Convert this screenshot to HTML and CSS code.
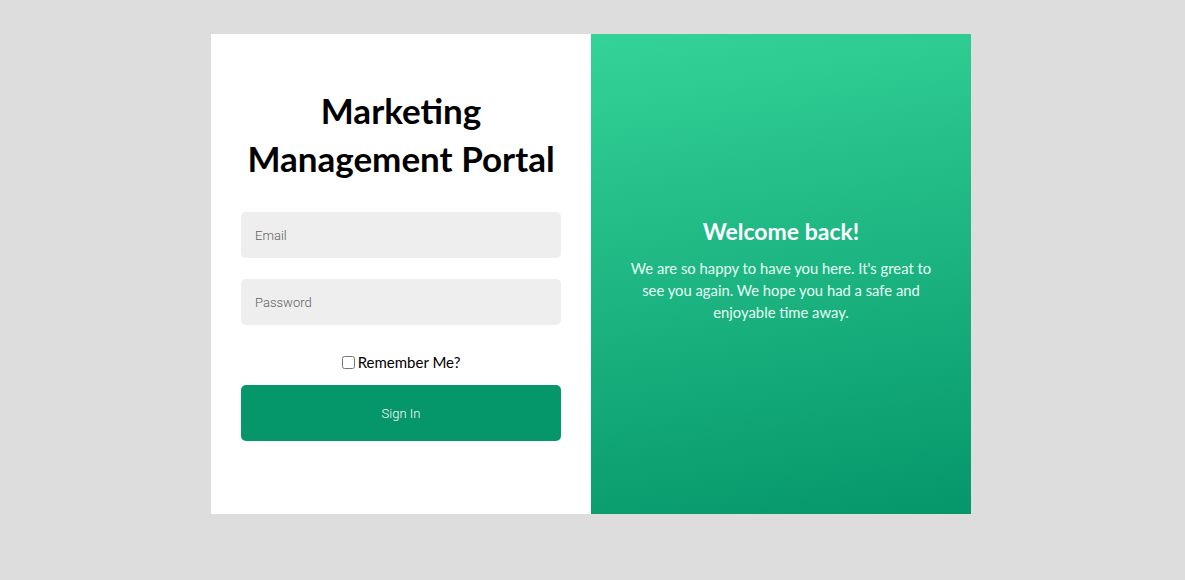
FILE: index.html
```html
<!DOCTYPE html>
<html lang="en">
<head>
<meta charset="utf-8">
<title>Marketing Management Portal</title>
<link rel="stylesheet" href="styles.css">
</head>
<body>
<main class="card">
  <section class="login">
    <h1 class="title">Marketing Management Portal</h1>
    <form class="form">
      <input class="field" type="email" placeholder="Email">
      <input class="field" type="password" placeholder="Password">
      <label class="remember"><input type="checkbox" class="check"><span>Remember Me?</span></label>
      <button type="button" class="submit">Sign In</button>
    </form>
  </section>
  <section class="welcome">
    <h2 class="welcome-title">Welcome back!</h2>
    <p class="welcome-text">We are so happy to have you here. It's great to see you again. We hope you had a safe and enjoyable time away.</p>
  </section>
</main>
</body>
</html>
```
FILE: styles.css
```css
html, body {
  margin: 0;
  padding: 0;
}
body {
  background: #dddddd;
  font-family: Lato, "Liberation Sans", sans-serif;
  height: 580px;
  display: flex;
  justify-content: center;
  align-items: flex-start;
  padding-right: 3px;
  box-sizing: border-box;
}
.card {
  margin-top: 34px;
  width: 760px;
  height: 480px;
  display: flex;
}
.login {
  width: 380px;
  background: #ffffff;
  box-sizing: border-box;
  padding: 52px 30px 0;
  display: flex;
  flex-direction: column;
}
.title {
  margin: 0 0 30px;
  text-align: center;
  font-size: 35px;
  line-height: 48px;
  font-weight: 700;
  color: #000;
}
.form {
  display: flex;
  flex-direction: column;
}
.field {
  height: 46px;
  border: none;
  border-radius: 5px;
  background: #eeeeee;
  padding: 0 14px;
  font-family: Roboto, sans-serif;
  font-size: 13px;
  font-weight: 300;
  color: #333;
  margin-bottom: 21px;
  outline: none;
}
.field::placeholder {
  color: #5f5f5f;
}
.remember {
  display: flex;
  align-items: center;
  justify-content: center;
  font-size: 15px;
  color: #000;
  margin: 5px 0 12px;
  height: 22px;
}
.check {
  margin: 0 3px 0 0;
  width: 13px;
  height: 13px;
}
.submit {
  height: 56px;
  border: none;
  border-radius: 5px;
  background: #059669;
  color: #ffffff;
  font-family: Roboto, sans-serif;
  font-size: 13px;
  font-weight: 300;
}
.welcome {
  width: 380px;
  background: linear-gradient(170deg, #34d399 0%, #059669 100%);
  color: #ffffff;
  display: flex;
  flex-direction: column;
  align-items: center;
  justify-content: center;
  padding: 0 38px 10px;
  box-sizing: border-box;
  text-align: center;
}
.welcome-title {
  margin: 0 0 11px;
  font-size: 23px;
  line-height: 30px;
  font-weight: 700;
}
.welcome-text {
  margin: 0;
  font-size: 14.8px;
  line-height: 22px;
  color: #e6fff4;
}
```
